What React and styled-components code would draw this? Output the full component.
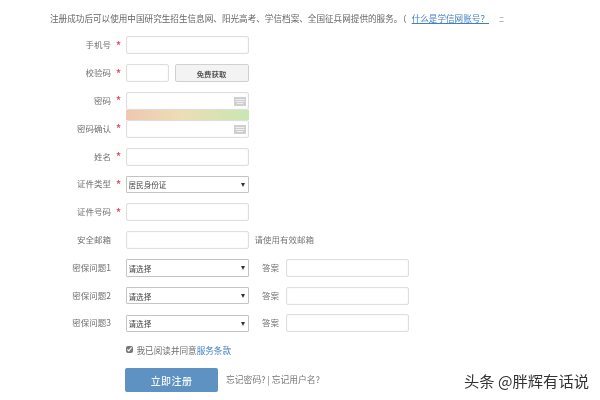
import styled, { createGlobalStyle } from 'styled-components';

const GlobalStyle = createGlobalStyle`
  html, body {
    margin: 0;
    background: #fff;
  }
  body {
    font-family: "Noto Sans CJK SC", "Liberation Sans", sans-serif;
    color: #6d6d6d;
    font-size: 8.5px;
  }
`;

const Page = styled.div`
  position: relative;
  width: 600px;
  height: 400px;
  overflow: hidden;
  filter: blur(0.4px);
`;

const Intro = styled.div`
  display: flex;
  align-items: center;
  height: 12px;
  padding: 12px 0 0 50px;
  font-size: 8.6px;
  white-space: nowrap;
  color: #666;
`;

const HelpLink = styled.a`
  color: #3f7fc4;
  text-decoration: underline;
  margin: 0 10px 0 5px;
`;

const Corner = styled.span`
  color: #777;
  font-size: 5px;
  line-height: 1;
`;

const Form = styled.form`
  display: flex;
  flex-direction: column;
  margin-top: 7.5px;
`;

const Row = styled.div`
  display: flex;
  align-items: center;
  height: 27.8px;
`;

const Label = styled.label`
  width: 111px;
  padding-bottom: 2px;
  text-align: right;
  color: #707070;
`;

const Star = styled.span`
  width: 14.5px;
  padding: 0 0 2px 5px;
  box-sizing: border-box;
  color: #e8506e;
  font-size: 10px;
  font-weight: 700;
`;

const Field = styled.div`
  position: relative;
  width: ${(p) => p.$w || 123}px;
`;

const Input = styled.input`
  display: block;
  width: 100%;
  height: 18px;
  box-sizing: border-box;
  border: 1px solid #dedede;
  border-radius: 2px;
  background: #fff;
  box-shadow: inset 0 0 2px #eee;
`;

const Keyboard = styled.svg`
  position: absolute;
  right: 3px;
  top: 5px;
  width: 12px;
  height: 9px;
`;

const StrengthBar = styled.div`
  position: absolute;
  left: 0;
  right: 0;
  top: 18px;
  height: 10px;
  background: linear-gradient(90deg, #eec7b0 0%, #eeddb4 45%, #c8e6b4 100%);
`;

const SendButton = styled.button`
  width: 74px;
  height: 18px;
  margin-left: 6px;
  padding: 0;
  box-sizing: border-box;
  border: 1px solid #d0d0d0;
  border-radius: 2px;
  background: #f3f3f3;
  color: #555;
  font-family: inherit;
  font-size: 7.4px;
  font-weight: 700;
`;

const Select = styled.select`
  display: block;
  width: 100%;
  height: 17.5px;
  box-sizing: border-box;
  padding: 1px 0 0 2px;
  border: 1px solid #c4c4c4;
  border-radius: 1px;
  background: #fff;
  color: #444;
  font-family: inherit;
  font-size: 7.6px;
  appearance: none;
`;

const Caret = styled.span`
  position: absolute;
  right: 4px;
  top: 7px;
  border-left: 2.5px solid transparent;
  border-right: 2.5px solid transparent;
  border-top: 4px solid #333;
`;

const Hint = styled.span`
  margin-left: 6px;
  padding-bottom: 2px;
  color: #777;
`;

const AnswerLabel = styled.span`
  width: 37.5px;
  padding: 0 7px 2px 0;
  box-sizing: border-box;
  text-align: right;
  color: #707070;
`;

const Agree = styled.label`
  display: flex;
  align-items: center;
  margin-top: -2px;
  padding-left: 125.5px;
  height: 29px;
  font-size: 8.6px;
  color: #707070;
`;

const Check = styled.input`
  width: 7px;
  height: 7px;
  margin: 0 4px 0 0;
  accent-color: #777;
`;

const TermsLink = styled.a`
  color: #3f7fc4;
`;

const Actions = styled.div`
  display: flex;
  align-items: center;
  margin-top: 4px;
  padding-left: 125px;
`;

const Submit = styled.button`
  width: 93px;
  height: 24px;
  border: 0;
  border-radius: 2px;
  background: #5d92c2;
  color: #f4f8fb;
  font-family: inherit;
  font-size: 10px;
  font-weight: 500;
  letter-spacing: 0.4px;
`;

const Forgot = styled.span`
  margin-left: 8px;
  padding-bottom: 2px;
  font-size: 8.8px;
  color: #777;
`;

const Watermark = styled.div`
  position: absolute;
  left: 464px;
  top: 369px;
  font-size: 15.3px;
  line-height: 22px;
  white-space: nowrap;
  color: #333;
  text-shadow: 1px 1px 0 #fff, -1px -1px 0 #fff;
`;

const questions = ['密保问题1', '密保问题2', '密保问题3'];

const KeyboardIcon = () => (
  <Keyboard viewBox="0 0 12 9">
    <rect x="0" y="0" width="12" height="9" fill="#cfcfcf" />
    <rect x="1.5" y="2" width="9" height="1" fill="#eee" />
    <rect x="1.5" y="4" width="9" height="1" fill="#eee" />
    <rect x="3" y="6" width="6" height="1" fill="#eee" />
  </Keyboard>
);

export default function App() {
  return (
    <Page>
      <GlobalStyle />
      <Intro>
        注册成功后可以使用中国研究生招生信息网、阳光高考、学信档案、全国征兵网提供的服务。（
        <HelpLink>什么是学信网账号？</HelpLink>
        <Corner>二</Corner>
      </Intro>
      <Form>
        <Row>
          <Label>手机号</Label>
          <Star>*</Star>
          <Field><Input /></Field>
        </Row>
        <Row>
          <Label>校验码</Label>
          <Star>*</Star>
          <Field $w={43}><Input /></Field>
          <SendButton type="button">免费获取</SendButton>
        </Row>
        <Row>
          <Label>密码</Label>
          <Star>*</Star>
          <Field>
            <Input />
            <KeyboardIcon />
            <StrengthBar />
          </Field>
        </Row>
        <Row>
          <Label>密码确认</Label>
          <Star>*</Star>
          <Field>
            <Input />
            <KeyboardIcon />
          </Field>
        </Row>
        <Row>
          <Label>姓名</Label>
          <Star>*</Star>
          <Field><Input /></Field>
        </Row>
        <Row>
          <Label>证件类型</Label>
          <Star>*</Star>
          <Field>
            <Select defaultValue="id"><option value="id">居民身份证</option></Select>
            <Caret />
          </Field>
        </Row>
        <Row>
          <Label>证件号码</Label>
          <Star>*</Star>
          <Field><Input /></Field>
        </Row>
        <Row>
          <Label>安全邮箱</Label>
          <Star />
          <Field><Input /></Field>
          <Hint>请使用有效邮箱</Hint>
        </Row>
        {questions.map((q) => (
          <Row key={q}>
            <Label>{q}</Label>
            <Star />
            <Field>
              <Select defaultValue=""><option value="">请选择</option></Select>
              <Caret />
            </Field>
            <AnswerLabel>答案</AnswerLabel>
            <Field><Input /></Field>
          </Row>
        ))}
        <Agree>
          <Check type="checkbox" defaultChecked />
          我已阅读并同意<TermsLink>服务条款</TermsLink>
        </Agree>
        <Actions>
          <Submit type="button">立即注册</Submit>
          <Forgot>忘记密码? | 忘记用户名?</Forgot>
        </Actions>
      </Form>
      <Watermark>头条 @胖辉有话说</Watermark>
    </Page>
  );
}
